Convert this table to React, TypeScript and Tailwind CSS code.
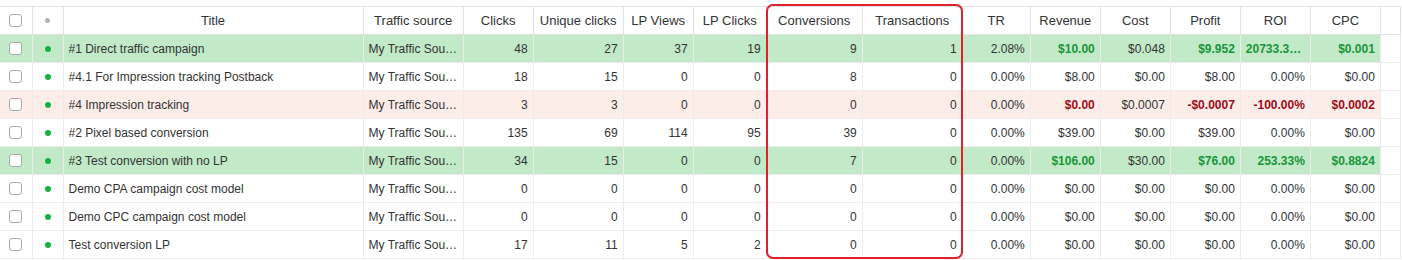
import React from "react";

type Tone = "good" | "bad" | "none";

const columns = [
  { key: "check", label: "", w: "w-[32px]" },
  { key: "dot", label: "", w: "w-[31px]" },
  { key: "title", label: "Title", w: "w-[300px]" },
  { key: "source", label: "Traffic source", w: "w-[100px]" },
  { key: "clicks", label: "Clicks", w: "w-[70px]" },
  { key: "unique", label: "Unique clicks", w: "w-[90px]" },
  { key: "lpViews", label: "LP Views", w: "w-[70px]" },
  { key: "lpClicks", label: "LP Clicks", w: "w-[73px]" },
  { key: "conv", label: "Conversions", w: "w-[96px]" },
  { key: "trans", label: "Transactions", w: "w-[100px]" },
  { key: "tr", label: "TR", w: "w-[68px]" },
  { key: "revenue", label: "Revenue", w: "w-[70px]" },
  { key: "cost", label: "Cost", w: "w-[70px]" },
  { key: "profit", label: "Profit", w: "w-[70px]" },
  { key: "roi", label: "ROI", w: "w-[70px]" },
  { key: "cpc", label: "CPC", w: "w-[70px]" },
  { key: "pad", label: "", w: "w-[20px]" },
];

const rows: {
  title: string;
  tone: Tone;
  nums: (string | number)[];
  money: string[];
}[] = [
  {
    title: "#1 Direct traffic campaign",
    tone: "good",
    nums: [48, 27, 37, 19, 9, 1, "2.08%"],
    money: ["$10.00", "$0.048", "$9.952", "20733.33%", "$0.001"],
  },
  {
    title: "#4.1 For Impression tracking Postback",
    tone: "none",
    nums: [18, 15, 0, 0, 8, 0, "0.00%"],
    money: ["$8.00", "$0.00", "$8.00", "0.00%", "$0.00"],
  },
  {
    title: "#4 Impression tracking",
    tone: "bad",
    nums: [3, 3, 0, 0, 0, 0, "0.00%"],
    money: ["$0.00", "$0.0007", "-$0.0007", "-100.00%", "$0.0002"],
  },
  {
    title: "#2 Pixel based conversion",
    tone: "none",
    nums: [135, 69, 114, 95, 39, 0, "0.00%"],
    money: ["$39.00", "$0.00", "$39.00", "0.00%", "$0.00"],
  },
  {
    title: "#3 Test conversion with no LP",
    tone: "good",
    nums: [34, 15, 0, 0, 7, 0, "0.00%"],
    money: ["$106.00", "$30.00", "$76.00", "253.33%", "$0.8824"],
  },
  {
    title: "Demo CPA campaign cost model",
    tone: "none",
    nums: [0, 0, 0, 0, 0, 0, "0.00%"],
    money: ["$0.00", "$0.00", "$0.00", "0.00%", "$0.00"],
  },
  {
    title: "Demo CPC campaign cost model",
    tone: "none",
    nums: [0, 0, 0, 0, 0, 0, "0.00%"],
    money: ["$0.00", "$0.00", "$0.00", "0.00%", "$0.00"],
  },
  {
    title: "Test conversion LP",
    tone: "none",
    nums: [17, 11, 5, 2, 0, 0, "0.00%"],
    money: ["$0.00", "$0.00", "$0.00", "0.00%", "$0.00"],
  },
];

function Checkbox() {
  return (
    <span className="mx-auto block h-[13px] w-[13px] rounded-[3px] border border-[#a9a9a9] bg-white" />
  );
}

const cell = "h-[28px] border-b border-r border-[#ececec] px-[5px] truncate";

export default function App() {
  return (
    <div className="relative bg-white pt-[6px] font-['Liberation_Sans',Arial,sans-serif] text-[12px] text-[#333]">
      <table className="table-fixed border-collapse w-[1401px] border-t border-[#e3e3e3]">
        <colgroup>
          {columns.map((c) => (
            <col key={c.key} className={c.w} />
          ))}
        </colgroup>
        <thead>
          <tr>
            {columns.map((c) => (
              <th
                key={c.key}
                className="h-[28px] border-b border-r border-[#e3e3e3] px-[3px] text-center text-[13px] font-normal truncate"
              >
                {c.key === "check" ? (
                  <Checkbox />
                ) : c.key === "dot" ? (
                  <span className="mx-auto block h-[5px] w-[5px] rounded-full bg-[#b3b3b3]" />
                ) : (
                  c.label
                )}
              </th>
            ))}
          </tr>
        </thead>
        <tbody>
          {rows.map((r) => {
            const bg =
              r.tone === "good"
                ? "bg-[#c2e9c8]"
                : r.tone === "bad"
                  ? "bg-[#fdede9]"
                  : "bg-white";
            const moneyText =
              r.tone === "good"
                ? "font-bold text-[#16963a]"
                : r.tone === "bad"
                  ? "font-bold text-[#9e0b17]"
                  : "";
            return (
              <tr key={r.title}>
                <td className={`${cell} ${bg}`}>
                  <Checkbox />
                </td>
                <td className={`${cell} ${bg}`}>
                  <span className="mx-auto block h-[6px] w-[6px] rounded-full bg-[#13b347]" />
                </td>
                <td className={`${cell} ${bg} text-left`}>{r.title}</td>
                <td className={`${cell} ${bg} text-left`}>My Traffic Source</td>
                {r.nums.map((n, i) => (
                  <td key={i} className={`${cell} ${bg} text-right`}>
                    {n}
                  </td>
                ))}
                {r.money.map((m, i) => (
                  <td
                    key={i}
                    className={`${cell} ${bg} text-right ${i === 1 ? "" : moneyText}`}
                  >
                    {m}
                  </td>
                ))}
                <td className="h-[28px] border-b border-r border-[#ececec] bg-white" />
              </tr>
            );
          })}
        </tbody>
      </table>
      {/* highlight annotation over Conversions / Transactions */}
      <div className="pointer-events-none absolute left-[766px] top-[4px] h-[255px] w-[197px] rounded-[7px] border-[2.5px] border-[#e0202b]" />
    </div>
  );
}
